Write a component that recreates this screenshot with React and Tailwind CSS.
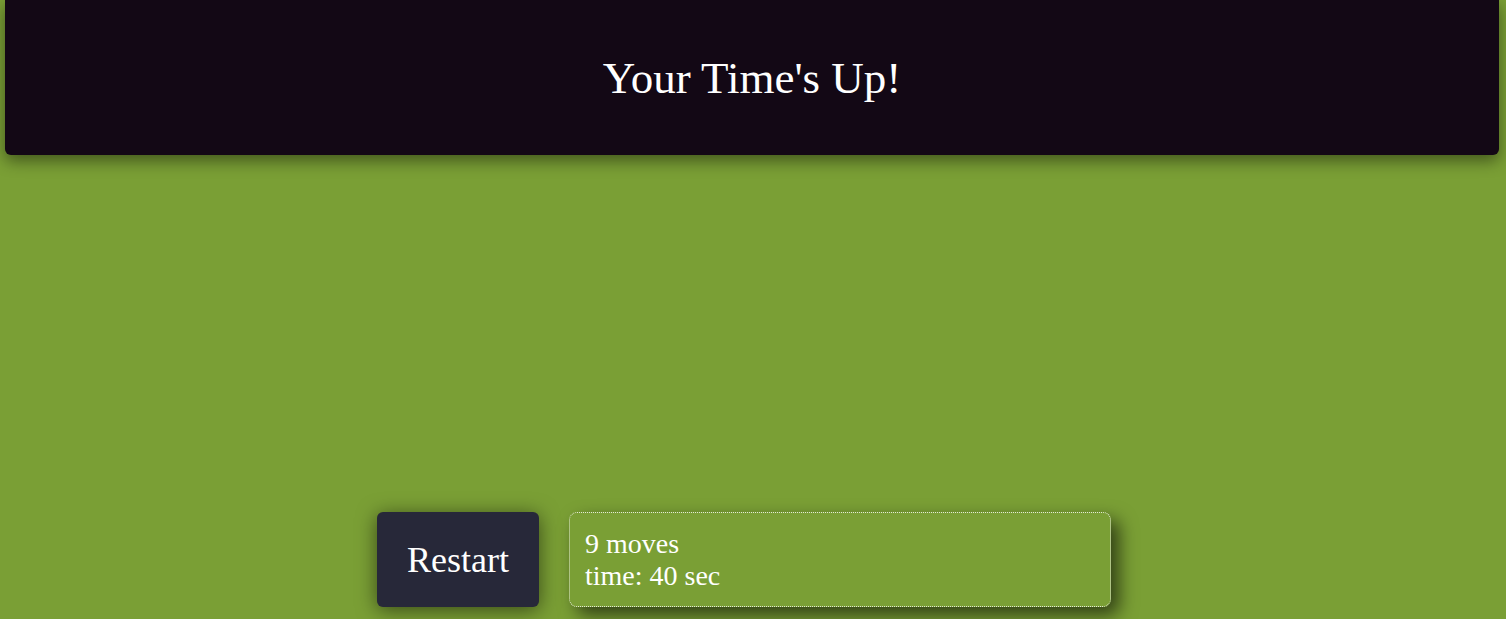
import React from 'react';

const App = () => {
  return (
    <div className="min-h-screen w-full bg-[#7a9f35] pl-[5px] pr-[7px] font-['Liberation_Serif','Times_New_Roman',serif] text-white">
      <header className="flex h-[155px] items-center justify-center rounded-b-[6px] bg-[#130815] shadow-[0_6px_16px_rgba(0,0,0,0.45)]">
        <h1 className="pt-[2px] text-[45px] font-normal leading-none">Your Time's Up!</h1>
      </header>
      <div className="ml-[372px] mt-[357px] flex gap-[30px]">
        <button className="flex h-[95px] w-[162px] items-center justify-center rounded-[6px] bg-[#272839] text-[36px] leading-none text-white shadow-[0_3px_20px_rgba(0,0,0,0.55)]">
          Restart
        </button>
        <div className="h-[95px] w-[542px] rounded-[8px] border border-dotted border-[#e3e9d6] px-[15px] py-[15px] text-[28px] leading-[32px] shadow-[8px_8px_18px_rgba(0,0,0,0.6)]">
          <p>9 moves</p>
          <p>time: 40 sec</p>
        </div>
      </div>
    </div>
  );
};

export default App;
